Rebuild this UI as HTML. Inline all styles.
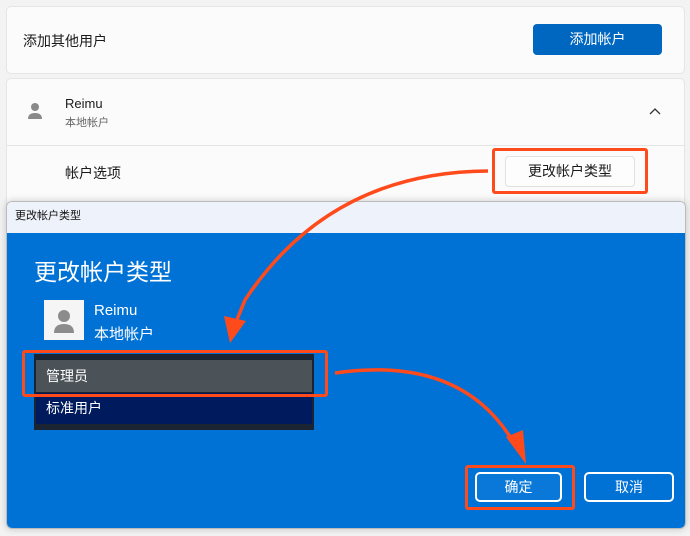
<!DOCTYPE html>
<html><head><meta charset="utf-8"><style>
body{margin:0;width:690px;height:536px;background:#f3f3f3;position:relative;overflow:hidden;font-family:"Liberation Sans","Noto Sans CJK SC",sans-serif;}
.abs{position:absolute}
.card{position:absolute;background:#fbfbfb;border:1px solid #e5e5e5;border-radius:5px}
</style></head><body>
<div class="card" style="left:6px;top:6px;width:677px;height:66px"></div>
<div class="abs" style="left:23px;top:31px;font-size:14px;color:#1a1a1a">添加其他用户</div>
<div class="abs" style="left:533px;top:24px;width:129px;height:31px;background:#0067c0;border-radius:4px;color:#fff;font-size:14px;text-align:center;line-height:31px">添加帐户</div>
<div class="card" style="left:6px;top:78px;width:677px;height:130px"></div>
<div class="abs" style="left:6px;top:145px;width:678px;height:1px;background:#e5e5e5"></div>
<svg class="abs" style="left:26px;top:101px" width="18" height="20"><circle cx="9" cy="6" r="4" fill="#8a8a8a"/><path d="M2 18 Q2 12 9 12 Q16 12 16 18 Z" fill="#8a8a8a"/></svg>
<div class="abs" style="left:65px;top:96px;font-size:13px;color:#1a1a1a">Reimu</div>
<div class="abs" style="left:65px;top:114px;font-size:11px;color:#666">本地帐户</div>
<svg class="abs" style="left:648px;top:106px" width="14" height="10"><path d="M2 8 L7 3 L12 8" fill="none" stroke="#333" stroke-width="1.3"/></svg>
<div class="abs" style="left:65px;top:163px;font-size:14px;color:#1a1a1a">帐户选项</div>
<div class="abs" style="left:505px;top:156px;width:128px;height:29px;background:#fdfdfd;border:1px solid #e0e0e0;border-radius:4px;font-size:14px;text-align:center;line-height:29px;color:#1a1a1a">更改帐户类型</div>
<div class="abs" style="left:492px;top:148px;width:156px;height:46px;border:3px solid #ff4a1c;border-radius:3px;box-sizing:border-box"></div>
<!-- dialog -->
<div class="abs" style="left:6px;top:201px;width:680px;height:328px;border-radius:6px;overflow:hidden;border:1px solid #bbb;box-sizing:border-box;box-shadow:0 0 8px rgba(0,0,0,.2)">
<div style="height:31px;background:#eef2fa;font-size:11px;line-height:29px;padding-left:8px;color:#111">更改帐户类型</div>
<div style="height:297px;background:#0072d6"></div>
</div>
<div class="abs" style="left:34px;top:253px;font-size:23px;color:#fff">更改帐户类型</div>
<div class="abs" style="left:44px;top:300px;width:40px;height:40px;background:#f5f5f5"></div>
<svg class="abs" style="left:44px;top:300px" width="40" height="40"><circle cx="20" cy="16" r="6" fill="#8c8c8c"/><path d="M10 33 Q10 24 20 24 Q30 24 30 33 Z" fill="#8c8c8c"/></svg>
<div class="abs" style="left:94px;top:302px;font-size:15px;color:#fff">Reimu</div>
<div class="abs" style="left:94px;top:323px;font-size:15px;color:#fff">本地帐户</div>
<div class="abs" style="left:34px;top:354px;width:280px;height:76px;background:#1b2432"></div>
<div class="abs" style="left:36px;top:360px;width:276px;height:32px;background:#4b5258;color:#fff;font-size:14px;line-height:32px;text-indent:10px">管理员</div>
<div class="abs" style="left:36px;top:393px;width:276px;height:31px;background:#001a5e;color:#fff;font-size:14px;line-height:30px;text-indent:10px">标准用户</div>
<div class="abs" style="left:22px;top:350px;width:306px;height:47px;border:3px solid #ff4a1c;border-radius:3px;box-sizing:border-box"></div>
<div class="abs" style="left:475px;top:472px;width:87px;height:30px;border:2px solid #fff;border-radius:5px;box-sizing:border-box;background:#0a78d8;color:#fff;font-size:14px;text-align:center;line-height:26px">确定</div>
<div class="abs" style="left:465px;top:465px;width:110px;height:45px;border:3px solid #ff4a1c;border-radius:3px;box-sizing:border-box"></div>
<div class="abs" style="left:584px;top:472px;width:90px;height:30px;border:2px solid #fff;border-radius:5px;box-sizing:border-box;color:#fff;font-size:14px;text-align:center;line-height:26px">取消</div>
<svg class="abs" style="left:0;top:0" width="690" height="536">
<path d="M488 171 Q330 172 245 300 L236 322" fill="none" stroke="#ff4a1c" stroke-width="3.5"/>
<path d="M224 316 L230 343 L246 321 Z" fill="#ff4a1c"/>
<path d="M335 373 Q460 355 512 440" fill="none" stroke="#ff4a1c" stroke-width="3.5"/>
<path d="M506 437 L526 464 L523 430 Z" fill="#ff4a1c"/>
</svg>
</body></html>
